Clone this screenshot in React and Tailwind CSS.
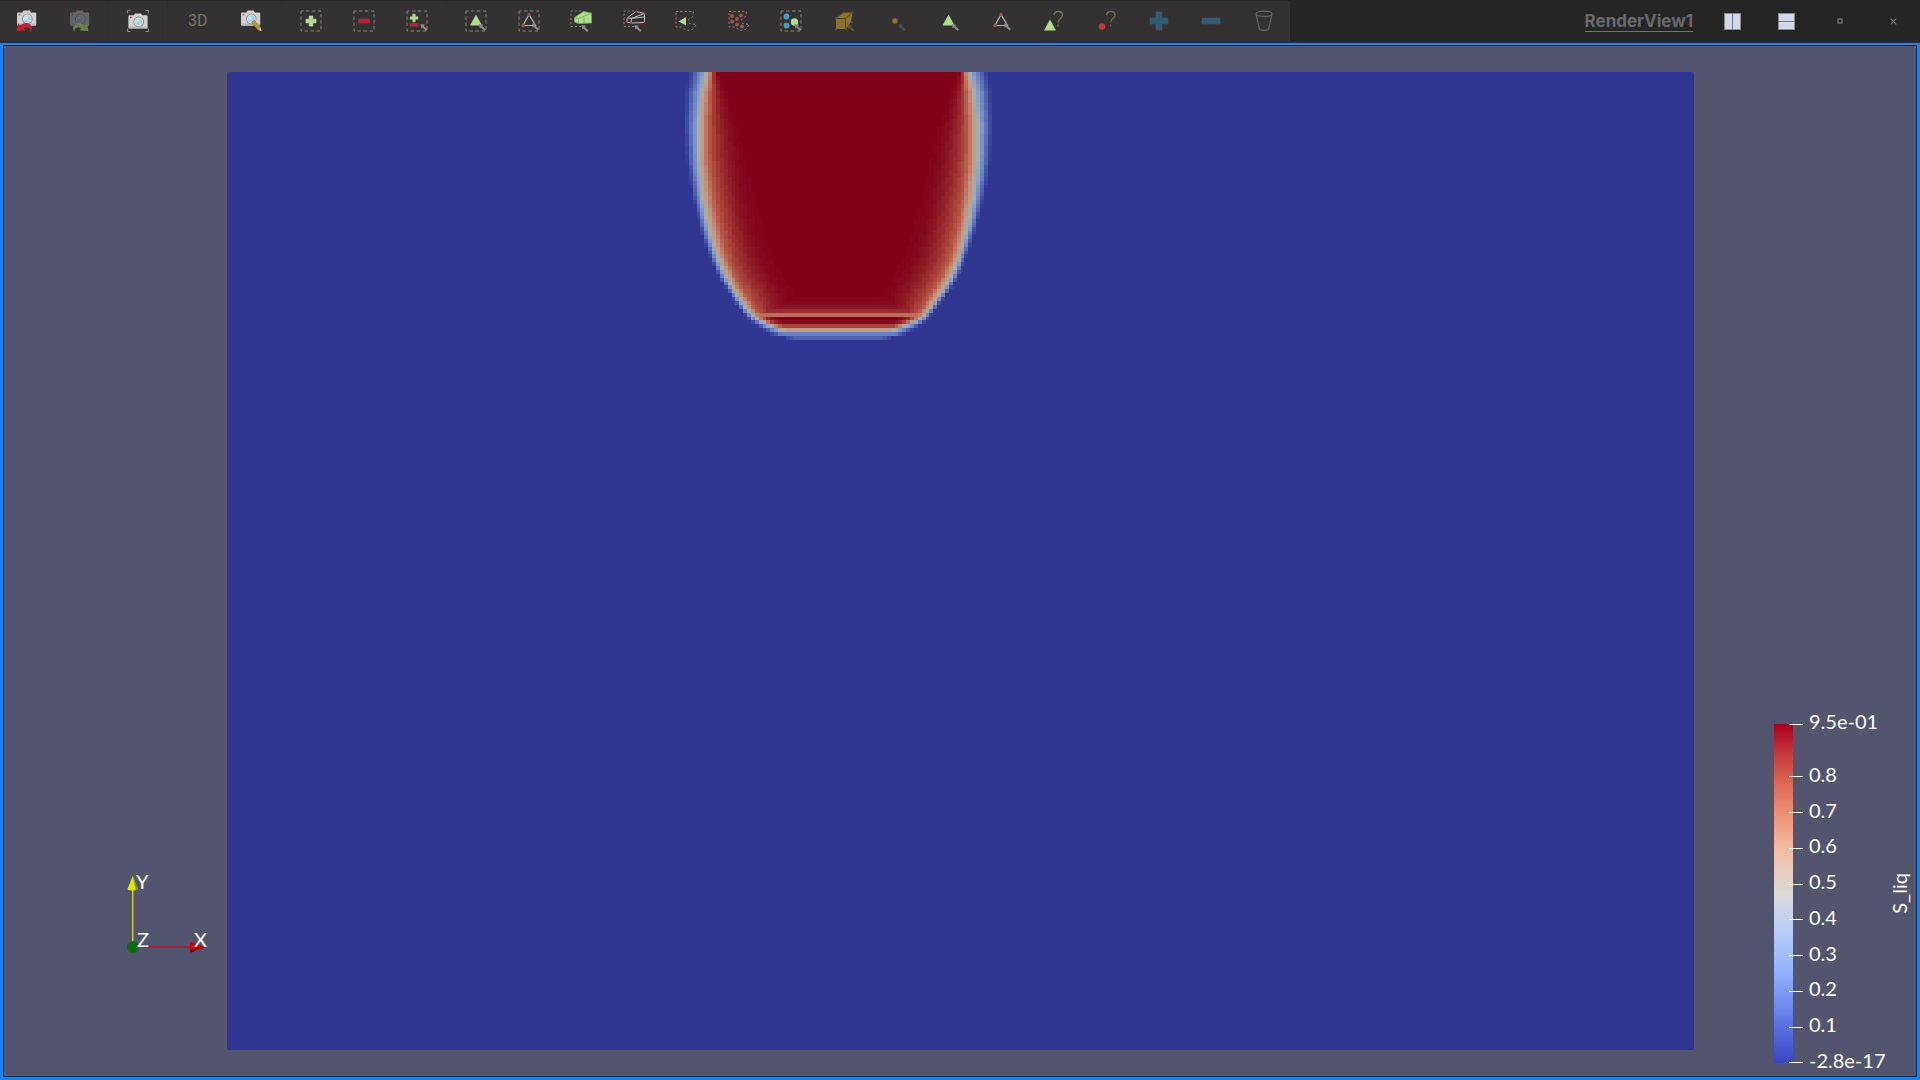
import React from "react";

/* ---------- toolbar icons ---------- */

function Icon({ children }) {
  return (
    <svg viewBox="0 0 24 24" className="size-6" fill="none" aria-hidden="true">
      {children}
    </svg>
  );
}

function Camera() {
  return (
    <g>
      <path d="M8.5 3.4 9.6 1.6h6l1.2 1.8H21a1.2 1.2 0 0 1 1.2 1.2V15.600a1.200 1.200 0 0 1-1.200 1.200H4.200A1.200 1.200 0 0 1 3 15.600V4.600A1.200 1.200 0 0 1 4.200 3.400z" fill="#d2d2d2" />
      <path d="M3.500 14.500h18.300v2H3.500z" fill="#b9b9b9" />
      <circle cx="13.300" cy="10" r="5.400" fill="#8e9296" />
      <circle cx="13.300" cy="10" r="4.400" fill="#e6e9ec" />
      <circle cx="13.300" cy="10" r="3.500" fill="#a9cfee" />
      <circle cx="12.300" cy="9" r="1.400" fill="#d7ebfa" />
      <rect x="4.600" y="4.800" width="1.600" height="1.600" fill="#cf3038" />
    </g>
  );
}

function CurvedArrow({ color }) {
  return (
    <path
      d="M2.500 22.300 4 14.300l2.200 2C9 13.700 13.500 13 16 15.300c2.700 2.400 2.300 5.500.3 7.700.3-2.400-.5-4-2.500-4.500-1.300-.3-2.700 0-4 1l1.700 1.800z"
      fill={color}
    />
  );
}

function Frame() {
  return <rect x="2" y="2" width="20" height="20" stroke="#858585" strokeWidth="1" strokeDasharray="3.500 2.500" strokeDashoffset="1" />;
}

function PartialFrame() {
  return <path d="M12 2H2v15.500h10l3 1" stroke="#858585" strokeWidth="1" strokeDasharray="2.200 2" />;
}

function LassoFrame() {
  return (
    <path d="M2 2.500h17.500l-1 5-4 3 1 4 7 1-4 5-5.500 1-5-3.500H2z" stroke="#858585" strokeWidth="1" strokeDasharray="2.200 2.200" />
  );
}

function Pointer({ x = 15, y = 15, color = "#8b8b8b" }) {
  return (
    <g transform={`translate(${x} ${y})`}>
      <path d="M0 0l4.500.8-1.200 1.200 3.700 3.600-1.500 1.500-3.600-3.700L.8 4.500z" fill={color} />
    </g>
  );
}

function Plus({ cx, cy, r, w, color, edge }) {
  const h = w / 2;
  return (
    <path
      d={`M${cx - h} ${cy - r}h${w}v${r - h}h${r - h}v${w}h${h - r}v${r - h}h${-w}v${h - r}h${h - r}v${-w}h${r - h}z`}
      fill={color}
      stroke={edge}
      strokeWidth="0.600"
    />
  );
}

function WireTriangle() {
  return (
    <g>
      <path d="M12 5.500 6 16.500h12.500z" stroke="#b5b5b5" strokeWidth="1.200" />
      <circle cx="12" cy="5.500" r="1.700" fill="#a4503f" />
      <circle cx="6" cy="16.500" r="1.700" fill="#a4503f" />
      <Pointer x={15} y={14.500} />
    </g>
  );
}

const GREEN = "#aede8c";

const icons = {
  undoCamera: <Icon><Camera /><CurvedArrow color="#c4202e" /></Icon>,
  redoCamera: (
    <Icon>
      <g opacity="0.320"><Camera /></g>
      <g transform="translate(24 0) scale(-1 1)"><CurvedArrow color="#66804f" /></g>
    </Icon>
  ),
  resetCamera: (
    <Icon>
      <path d="M1.500 4.500v-3h3M19.500 1.500h3v3M22.500 19.500v3h-3M4.500 22.500h-3v-3" stroke="#8a8a8a" />
      <g transform="translate(-0.600 2.800)"><Camera /></g>
    </Icon>
  ),
  editCamera: (
    <Icon>
      <g transform="translate(-1 0)"><Camera /></g>
      <path d="M12.500 13.500l2.700-2.300 6.600 7.600.4 3.200-3-.8z" fill="#b69a34" stroke="#7c6a22" strokeWidth="0.500" />
      <path d="M20 20.300l1.700-1.400.6 3.300z" fill="#f1ead8" />
    </Icon>
  ),
  addSelection: <Icon><Frame /><Plus cx={12} cy={12} r={5} w={3.6} color={GREEN} edge="#d4efc4" /></Icon>,
  subtractSelection: (
    <Icon><Frame /><rect x="6.500" y="10" width="11" height="4" fill="#c01c2c" stroke="#8c4148" strokeWidth="0.600" /></Icon>
  ),
  toggleSelection: (
    <Icon>
      <Frame />
      <Plus cx={9} cy={9} r={3.8} w={2.4} color={GREEN} edge="#c6e8b2" />
      <rect x="5" y="14.500" width="8" height="2.600" fill="#c01c2c" stroke="#8c4148" strokeWidth="0.500" />
      <Pointer x={15.500} y={15} />
    </Icon>
  ),
  selectCells: <Icon><Frame /><path d="M12 5.500l6 11H6z" fill={GREEN} /><Pointer x={15} y={15} /></Icon>,
  selectPoints: <Icon><Frame /><WireTriangle /></Icon>,
  frustumCells: (
    <Icon>
      <PartialFrame />
      <path d="M5.500 8.500 14.500 2.500l8 1.500v10L9.500 14.500l-4-1.500z" fill={GREEN} stroke="#6fae4a" strokeWidth="0.800" />
      <path d="M5.500 8.500 9.500 9.500 22.500 4M9.500 9.500v5M15 7.500v6.500" stroke="#6c9c4d" strokeWidth="0.700" />
      <Pointer x={12.500} y={16} />
    </Icon>
  ),
  frustumPoints: (
    <Icon>
      <PartialFrame />
      <path d="M5 9 14 2.500l8.500 2v9L9 14l-4-1zM5 9l4.500.3L22.500 4.500M9.500 9.300 9 14M9.500 9.300 22.500 8" stroke="#c4c0c0" strokeWidth="1" />
      <path d="M4.200 8.200h1.600v1.600H4.200zM13.200 1.700h1.600v1.600h-1.600zM21.700 3.700h1.600v1.600h-1.600zM21.700 12.700h1.600v1.600h-1.600zM8.200 13.200h1.600v1.600H8.200zM4.200 12.200h1.600v1.600H4.200z" fill="#b02e30" />
      <Pointer x={12.500} y={16} />
    </Icon>
  ),
  polygonCells: <Icon><LassoFrame /><path d="M4.500 12.500 12 8v8.500z" fill={GREEN} /></Icon>,
  polygonPoints: (
    <Icon>
      <LassoFrame />
      {[[5, 7], [14, 6.500], [5, 12.500], [10, 10], [10, 15.500], [15, 17.500]].map(([x, y]) => (
        <circle key={`${x}-${y}`} cx={x} cy={y} r="1.900" fill="#aa523f" />
      ))}
    </Icon>
  ),
  selectBlocks: (
    <Icon>
      <Frame />
      <circle cx="7.500" cy="7.500" r="2.900" fill="#4a9ac4" />
      <circle cx="7.500" cy="16.500" r="2.900" fill="#4a9ac4" />
      <circle cx="15.500" cy="13" r="3.700" fill={GREEN} />
      <Pointer x={15.500} y={15} />
    </Icon>
  ),
  interactiveBlocks: (
    <Icon>
      <path d="M4 9.500 11.500 3.500h9L19 13l-5 7H4z" fill="#8c7128" />
      <path d="M4 9.500h9.500V20M13.500 9.500l7-6" stroke="#4d4426" strokeWidth="1" />
      <path d="M3 8.500h2v2H3zM10.500 2.500h2v2h-2zM19.500 2.500h2v2h-2zM3 19h2v2H3zM13 19h2v2h-2zM18.500 12h2v2h-2z" fill="#57503a" />
      <Pointer x={15.500} y={15.500} color="#55564b" />
    </Icon>
  ),
  hoverPoint: <Icon><circle cx="11" cy="12" r="2.800" fill="#8c7128" /><Pointer x={14.500} y={15} color="#50514a" /></Icon>,
  interactiveCells: <Icon><path d="M11.500 5.500l6 11h-12z" fill={GREEN} /><Pointer x={15} y={15} /></Icon>,
  interactivePoints: <Icon><WireTriangle /></Icon>,
  hoverCells: (
    <Icon>
      <path d="M8 10.500l6 11H2z" fill={GREEN} />
      <path d="M12 6c.4-2.400 2-3.500 4.300-3.500 2.500 0 4.200 1.300 4.200 3.500 0 3.800-4.500 3.500-4.500 7.500M16 15.500v2" stroke="#6f7258" strokeWidth="1.300" />
    </Icon>
  ),
  hoverPoints: (
    <Icon>
      <circle cx="8" cy="17.500" r="3.300" fill="#bf3a36" />
      <path d="M12.500 6c.4-2.400 2-3.500 4.300-3.500 2.500 0 4.200 1.300 4.200 3.500 0 3.800-4.500 3.500-4.500 7.500M16.500 15.500v2" stroke="#6f7258" strokeWidth="1.300" />
    </Icon>
  ),
  grow: <Icon><Plus cx={12} cy={12} r={9} w={6} color="#335c74" edge="#3c5562" /></Icon>,
  shrink: <Icon><rect x="3" y="9" width="18" height="6" fill="#335c74" stroke="#3c5562" strokeWidth="0.600" /></Icon>,
  clear: (
    <Icon>
      <path d="M4 5l3.500 15.500c1.500 1.300 7.500 1.300 9 0L20 5" stroke="#666566" strokeWidth="1.200" />
      <ellipse cx="12" cy="4.800" rx="8" ry="2.600" stroke="#666566" strokeWidth="1.200" />
    </Icon>
  ),
};

function ToolButton({ label, children }) {
  return (
    <button type="button" aria-label={label} className="flex h-full flex-1 items-center justify-center">
      {children}
    </button>
  );
}

function Divider() {
  return <div className="mx-[3px] w-px bg-[#302e2f]" />;
}

function ViewToolbar() {
  return (
    <div role="toolbar" className="flex h-full bg-[#333132]">
      <div className="flex w-[105px]">
        <ToolButton label="Camera undo">{icons.undoCamera}</ToolButton>
        <ToolButton label="Camera redo">{icons.redoCamera}</ToolButton>
      </div>
      <Divider />
      <div className="flex w-[52px]">
        <ToolButton label="Reset camera">{icons.resetCamera}</ToolButton>
      </div>
      <Divider />
      <div className="flex w-[107px]">
        <button type="button" className="flex h-full flex-1 items-center justify-center font-[Roboto] text-base text-[#75765f]">
          3D
        </button>
        <ToolButton label="Adjust camera">{icons.editCamera}</ToolButton>
      </div>
      <Divider />
      <div className="flex w-[158px]">
        <ToolButton label="Add selection">{icons.addSelection}</ToolButton>
        <ToolButton label="Subtract selection">{icons.subtractSelection}</ToolButton>
        <ToolButton label="Toggle selection">{icons.toggleSelection}</ToolButton>
      </div>
      <Divider />
      <div className="flex w-[840px]">
        <ToolButton label="Select cells on">{icons.selectCells}</ToolButton>
        <ToolButton label="Select points on">{icons.selectPoints}</ToolButton>
        <ToolButton label="Select cells through">{icons.frustumCells}</ToolButton>
        <ToolButton label="Select points through">{icons.frustumPoints}</ToolButton>
        <ToolButton label="Select cells with polygon">{icons.polygonCells}</ToolButton>
        <ToolButton label="Select points with polygon">{icons.polygonPoints}</ToolButton>
        <ToolButton label="Select block">{icons.selectBlocks}</ToolButton>
        <ToolButton label="Interactive select cell data">{icons.interactiveBlocks}</ToolButton>
        <ToolButton label="Interactive select point data">{icons.hoverPoint}</ToolButton>
        <ToolButton label="Interactive select cells">{icons.interactiveCells}</ToolButton>
        <ToolButton label="Interactive select points">{icons.interactivePoints}</ToolButton>
        <ToolButton label="Hover cells">{icons.hoverCells}</ToolButton>
        <ToolButton label="Hover points">{icons.hoverPoints}</ToolButton>
        <ToolButton label="Grow selection">{icons.grow}</ToolButton>
        <ToolButton label="Shrink selection">{icons.shrink}</ToolButton>
        <ToolButton label="Clear selection">{icons.clear}</ToolButton>
      </div>
    </div>
  );
}

function ViewControls() {
  return (
    <div className="flex h-full items-center">
      <button type="button" className="mr-3 border-b border-[#737277] font-[Inter] text-[17px] leading-5 font-bold text-[#69686d]">
        RenderView1
      </button>
      <button type="button" aria-label="Split horizontal" className="flex h-full w-[54px] items-center justify-center">
        <svg width="17" height="17" viewBox="0 0 17 17"><rect x="0.500" y="0.500" width="16" height="16" fill="#d3d7ee" stroke="#8b8b90" /><path d="M8.500 0v17" stroke="#77777d" /></svg>
      </button>
      <button type="button" aria-label="Split vertical" className="flex h-full w-[54px] items-center justify-center">
        <svg width="17" height="17" viewBox="0 0 17 17"><rect x="0.500" y="0.500" width="16" height="16" fill="#d3d7ee" stroke="#8b8b90" /><path d="M0 8.500h17" stroke="#77777d" /></svg>
      </button>
      <button type="button" aria-label="Maximize" className="flex h-full w-[54px] items-center justify-center">
        <svg width="6" height="6" viewBox="0 0 6 6"><rect x="1" y="1" width="4" height="4" fill="none" stroke="#737277" strokeWidth="1.300" /></svg>
      </button>
      <button type="button" aria-label="Close" className="flex h-full w-[53px] items-center justify-center">
        <svg width="7" height="7" viewBox="0 0 7 7"><path d="M.7.7l5.600 5.600M6.300.7.7 6.300" stroke="#7c7b80" strokeWidth="1.200" /></svg>
      </button>
    </div>
  );
}

/* ---------- saturation field ---------- */

const COLS = 378;
const ROWS = 252;
const CENTER = 157.5;

// Distance of each level from the plume axis, in cells, by row.
const contours = [
  [0, 38.5, 33.8, 32.4, 30.7],
  [5.5, 39.5, 35.2, 32.9, 28],
  [14, 39.8, 36.1, 33.3, 24.5],
  [22.7, 39.2, 36, 33.2, 22.2],
  [31.2, 37.900, 35.2, 32.2, 20],
  [39.8, 35.8, 33.6, 30.7, 17.6],
  [48.400, 32.9, 31, 28.6, 14.5],
  [52.7, 31, 29.1, 26.7, 12],
  [57, 28.4, 26.6, 24.1, 9],
  [61.300, 25.2, 23.3, 21.300, 9],
  [63.5, 23.4, 21.3, 19.5, 14.5],
  [64.500, 22.4, 19.8, 17.7, 12.5],
  [65.5, 21.2, 17.5, 15, 8],
  [66.5, 19.6, 14.8, 11, 4],
  [67.5, 17.8, 12.5, 5, 0],
  [68.5, 14, 7, 2, 0],
  [69, 9, 3, 1, 0],
];
const levels = [0, 0.5, 0.72, 1];
const frontRows = { 57: 0.99, 58: 0.98, 59: 0.96, 60: 0.91, 61: 0.84, 62: 0.68, 64: 0.95, 65: 0.77, 66: 0.58, 67: 0.29, 68: 0.17 };

const ramp = [
  [0, 48, 53, 145],
  [0.12, 66, 80, 166],
  [0.3, 110, 134, 196],
  [0.42, 138, 160, 200],
  [0.5, 168, 172, 170],
  [0.58, 192, 156, 136],
  [0.66, 192, 118, 98],
  [0.74, 178, 82, 66],
  [0.82, 158, 50, 48],
  [0.91, 140, 20, 36],
  [1, 128, 0, 26],
];

function interpolate(table, at) {
  let i = 1;
  while (i < table.length - 1 && table[i][0] < at) i++;
  const a = table[i - 1];
  const b = table[i];
  const f = Math.min(1, Math.max(0, (at - a[0]) / (b[0] - a[0])));
  return a.slice(1).map((v, k) => v + (b[k + 1] - v) * f);
}

function saturation(col, row) {
  const d = Math.abs(col + 0.5 - CENTER);
  const r = interpolate(contours, row + 0.5);
  if (d >= r[0]) return 0;
  let s = 1;
  for (let k = 0; k < 3; k++) {
    if (d > r[k + 1]) {
      const f = (r[k] - d) / (r[k] - r[k + 1]);
      const eased = k === 2 ? 1 - (1 - f) ** 1.8 : f;
      s = levels[k] + (levels[k + 1] - levels[k]) * eased;
      break;
    }
  }
  return Math.min(s, frontRows[row] ?? 1);
}

function buildField() {
  const paths = {};
  for (let row = 0; row < 69; row++) {
    let start = 112;
    let last = 0;
    for (let col = 112; col <= 204; col++) {
      const s = col === 204 ? -1 : Math.round(saturation(col, row) * 50);
      if (s !== last) {
        if (last > 0) paths[last] = (paths[last] || "") + `M${start} ${row}h${col - start}v1h${start - col}z`;
        start = col;
        last = s;
      }
    }
  }
  return Object.entries(paths).map(([key, d]) => {
    const [r, g, b] = interpolate(ramp, Number(key) / 50).map(Math.round);
    return { key, d, fill: `rgb(${r} ${g} ${b})` };
  });
}

const field = buildField();

function SaturationField() {
  return (
    <svg
      viewBox={`0 0 ${COLS} ${ROWS}`}
      preserveAspectRatio="none"
      shapeRendering="crispEdges"
      className="min-h-0 w-full flex-1 rounded-xs bg-[#303591]"
      role="img"
      aria-label="S_liq field"
    >
      {field.map((p) => (
        <path key={p.key} d={p.d} fill={p.fill} />
      ))}
    </svg>
  );
}

/* ---------- view annotations ---------- */

function OrientationAxes() {
  return (
    <svg width="100" height="100" viewBox="0 0 100 100" className="font-[Lato] text-[20px]" fill="#ffffff">
      <path d="M12.700 79V20" stroke="#d3dc3a" strokeWidth="1.300" />
      <path d="M7.300 21.500 12.700 8l5.500 13.500c-3 1.300-8 1.300-10.900 0z" fill="#dcea00" />
      <path d="M12.700 8l5.500 13.500-2.500.8z" fill="#8b9408" />
      <path d="M14 79h57" stroke="#b5142c" strokeWidth="1.300" />
      <path d="M70.500 73.500 85 79l-14.500 5.500c-1-3-1-8 0-11z" fill="#d00008" />
      <path d="M70.500 84.500 85 79l-14.500 3z" fill="#6b0008" />
      <circle cx="12.700" cy="79" r="6" fill="#0a6e10" />
      <text x="16" y="21">Y</text>
      <text x="17" y="79">Z</text>
      <text x="74" y="79">X</text>
    </svg>
  );
}

const ticks = ["9.5e-01", "0.8", "0.7", "0.6", "0.5", "0.4", "0.3", "0.2", "0.1", "-2.8e-17"];

function ColorLegend() {
  return (
    <div className="flex font-[Lato] text-[20px] leading-6 text-white">
      <div className="my-3 h-[339px] w-[19px] bg-[linear-gradient(to_bottom,#a8001f_0%,#c63a3a_9%,#dd6551_17%,#ee9376_27%,#f4bda4_37%,#dddcdb_50%,#b8cdf7_61%,#92b2fd_73%,#6a86f0_84%,#3b45c2_100%)]" />
      <ul className="-ml-1 flex w-[98px] flex-col justify-between">
        {ticks.map((label, i) => (
          <li key={label} className={i === 0 ? "mb-[17px] flex h-6 items-center gap-1.5" : "flex h-6 items-center gap-1.5"}>
            <span className="h-px w-3.5 bg-white" />
            <span className="-mt-1.5">{label}</span>
          </li>
        ))}
      </ul>
      <div className="mb-[161px] flex items-end">
        <span className="rotate-180 [writing-mode:vertical-rl]">S_liq</span>
      </div>
    </div>
  );
}

export default function App() {
  return (
    <div className="flex h-screen flex-col overflow-hidden bg-[#252525]">
      <header className="flex h-[41px] shrink-0 items-center justify-between pt-px">
        <ViewToolbar />
        <ViewControls />
      </header>
      <div className="h-0.5 shrink-0 bg-[#0d2f5c]" />
      <div className="h-0.5 shrink-0 bg-[#3c7cc6]" />
      <main className="flex min-h-0 flex-1 border-x-[3px] border-b-[3px] border-[#1583f2]">
        <div className="flex flex-1 border border-[#0d2f5c] bg-[#53556f]">
          <aside className="flex w-[223px] items-end justify-end pr-[7px] pb-[108px]">
            <OrientationAxes />
          </aside>
          <section className="flex min-w-0 flex-1 flex-col pt-[26px] pb-[26px]">
            <SaturationField />
          </section>
          <aside className="flex w-[222px] items-end justify-end pr-[5px] pb-px">
            <ColorLegend />
          </aside>
        </div>
      </main>
    </div>
  );
}
